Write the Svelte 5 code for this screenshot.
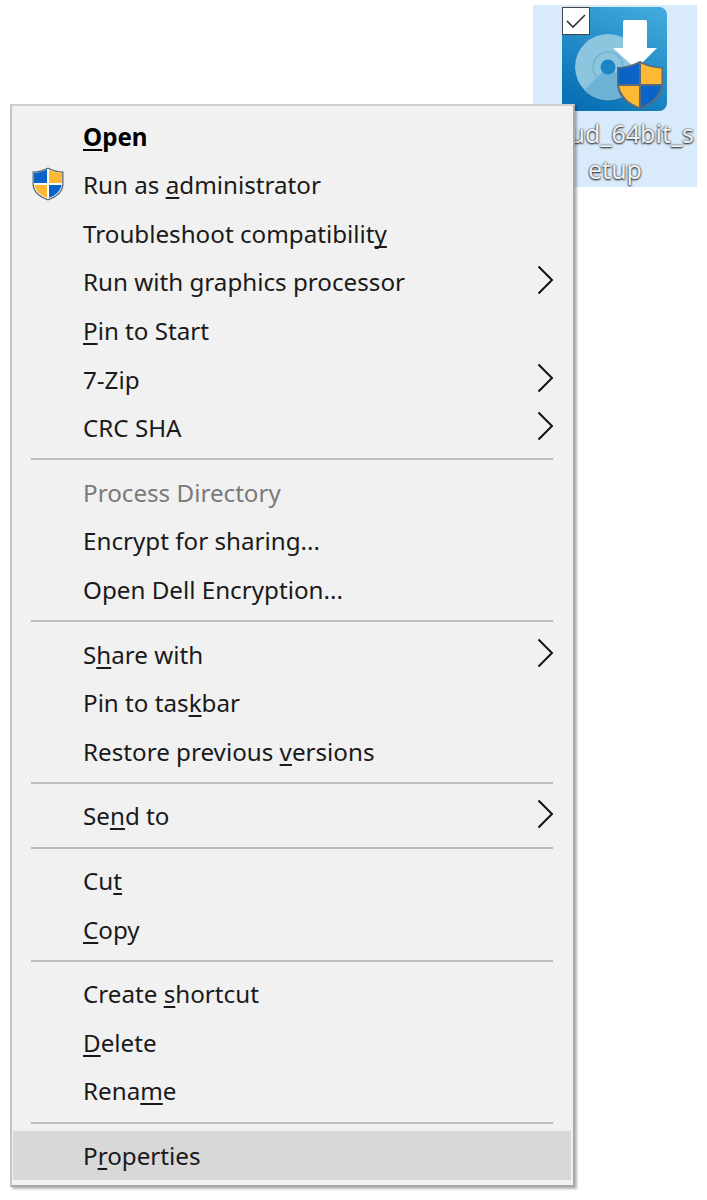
<script>
  const groups = [
    [
      { pre: '', u: 'O', post: 'pen', bold: true },
      { pre: 'Run as ', u: 'a', post: 'dministrator', shield: true },
      { pre: 'Troubleshoot compatibilit', u: 'y', post: '' },
      { pre: 'Run with graphics processor', arrow: true },
      { pre: '', u: 'P', post: 'in to Start' },
      { pre: '7-Zip', arrow: true },
      { pre: 'CRC SHA', arrow: true }
    ],
    [
      { pre: 'Process Directory', muted: true },
      { pre: 'Encrypt for sharing...' },
      { pre: 'Open Dell Encryption...' }
    ],
    [
      { pre: 'S', u: 'h', post: 'are with', arrow: true },
      { pre: 'Pin to tas', u: 'k', post: 'bar' },
      { pre: 'Restore previous ', u: 'v', post: 'ersions' }
    ],
    [{ pre: 'Se', u: 'n', post: 'd to', arrow: true }],
    [
      { pre: 'Cu', u: 't', post: '' },
      { pre: '', u: 'C', post: 'opy' }
    ],
    [
      { pre: 'Create ', u: 's', post: 'hortcut' },
      { pre: '', u: 'D', post: 'elete' },
      { pre: 'Rena', u: 'm', post: 'e' }
    ],
    [{ pre: 'P', u: 'r', post: 'operties', active: true }]
  ];
</script>

<div class="page">
  <div class="desktop-icon">
    <div class="tile">
      <svg class="art" viewBox="0 0 105 104" width="105" height="104">
        <defs>
          <linearGradient id="tileBg" x1="0.8" y1="0" x2="0.3" y2="1">
            <stop offset="0" stop-color="#3fa9dc" />
            <stop offset="1" stop-color="#0870b4" />
          </linearGradient>
        </defs>
        <rect width="105" height="104" rx="8" fill="url(#tileBg)" />
        <circle cx="46" cy="61" r="33" fill="#0b5f9c" />
        <circle cx="46" cy="60" r="33" fill="#8cc6de" />
        <path d="M46 60 L74 78 A33 33 0 0 1 22 83 Z" fill="#6cb2d4" />
        <circle cx="46" cy="60" r="15" fill="none" stroke="#6fb2d2" stroke-width="1.5" />
        <circle cx="46" cy="60" r="7.5" fill="#1b85c5" />
        <path d="M61 15 Q61 13 63 13 H83 Q85 13 85 15 V41 H95 L74 62 L51 41 H61 Z" fill="#fff" />
        <path d="M78 54 Q90 60 101 60 V76 Q101 94 78 102 Q55 94 55 76 V60 Q66 60 78 54 Z" fill="#5c6b7a" />
        <path d="M77 56.5 V77 H56.5 V61.5 Q67 61 77 56.5 Z" fill="#0a64c8" />
        <path d="M79 56.5 Q89 61 99.5 61.5 V77 H79 Z" fill="#fdb933" />
        <path d="M77 79 V100 Q61 94 57 79 Z" fill="#fdb933" />
        <path d="M79 79 H99 Q95 94 79 100 Z" fill="#0a64c8" />
      </svg>
      <div class="check">
        <svg viewBox="0 0 26 26" width="26" height="26">
          <path d="M4 13 L10 19 L22 7" fill="none" stroke="#333" stroke-width="1.6" />
        </svg>
      </div>
    </div>
    <div class="label">cloud_64bit_setup</div>
  </div>

  <div class="menu">
    {#each groups as group, g}
      {#if g > 0}
        <div class="sep"></div>
      {/if}
      {#each group as item}
        <div class="row" class:active={item.active} class:muted={item.muted} class:bold={item.bold}>
          <span class="gutter">
            {#if item.shield}
              <svg viewBox="0 0 32 34" width="32" height="34">
                <path d="M16 0.5 Q24 4.5 31.5 4.5 V17 Q31.5 28 16 33.5 Q0.5 28 0.5 17 V4.5 Q8 4.5 16 0.5 Z" fill="#5c6b7a" />
                <path d="M16 2 Q23 5.5 30.2 5.8 V17 Q30 27 16 32 Q2 27 1.8 17 V5.8 Q9 5.5 16 2 Z" fill="#fff" />
                <path d="M15 2.5 V16 H2 V6 Q9 5.5 15 2.5 Z" fill="#0a64c8" />
                <path d="M17 2.5 Q23 5.5 30 6 V16 H17 Z" fill="#fdb933" />
                <path d="M15 18 V31 Q4.5 27 2.2 18 Z" fill="#fdb933" />
                <path d="M17 18 H29.8 Q27.5 27 17 31 Z" fill="#0a64c8" />
              </svg>
            {/if}
          </span>
          <span class="text">{item.pre}{#if item.u}<u>{item.u}</u>{/if}{item.post ?? ''}</span>
          {#if item.arrow}
            <svg class="arrow" viewBox="0 0 18 30" width="18" height="30">
              <path d="M1.5 1.5 L15 15 L1.5 28.5" fill="none" stroke="#111" stroke-width="2" />
            </svg>
          {/if}
        </div>
      {/each}
    {/each}
  </div>
</div>

<style>
  :global(body) {
    margin: 0;
    background: #fff;
  }
  .page {
    position: relative;
    width: 707px;
    height: 1200px;
    overflow: hidden;
    font-family: "Noto Sans", "Open Sans", sans-serif;
  }
  .desktop-icon {
    position: absolute;
    left: 533px;
    top: 5px;
    width: 164px;
    height: 182px;
    background: #d9eafa;
    display: flex;
    flex-direction: column;
    align-items: center;
  }
  .tile {
    position: relative;
    width: 105px;
    height: 104px;
    margin-top: 2px;
    margin-left: -2px;
  }
  .art {
    display: block;
  }
  .check {
    position: absolute;
    left: 0;
    top: 0;
    width: 26px;
    height: 26px;
    background: #fff;
    border: 1.5px solid #444;
    box-sizing: content-box;
  }
  .label {
    width: 164px;
    margin-top: 4px;
    padding: 0 2px;
    box-sizing: border-box;
    text-align: center;
    word-break: break-all;
    font-size: 25px;
    line-height: 36px;
    color: #eef1f4;
    text-shadow: 0 1px 2px #222, 0 0 2px #333;
  }
  .menu {
    position: absolute;
    left: 10px;
    top: 104px;
    width: 565px;
    box-sizing: border-box;
    padding: 5.8px 2px 5px 1px;
    background: #f1f1f1;
    border: 2px solid #a9a9a9;
    border-top-color: #d0d0d0;
    border-left-color: #c4c4c4;
    box-shadow: 2px 2px 2px rgba(0, 0, 0, 0.28);
  }
  .row {
    display: flex;
    align-items: center;
    height: 48.6px;
    font-size: 24.2px;
    color: #1a1a1a;
    white-space: nowrap;
  }
  .row.active {
    background: #d8d8d8;
  }
  .row.muted {
    color: #7a7a7a;
  }
  .row.bold {
    font-weight: 700;
    color: #000;
  }
  .gutter {
    width: 70px;
    flex: none;
    display: flex;
    justify-content: center;
    box-sizing: border-box;
  }
  .gutter svg {
    margin-right: 1px;
    margin-top: -2px;
  }
  .text {
    flex: 1;
  }
  u {
    text-decoration-thickness: 2px;
    text-underline-offset: 3px;
    text-decoration-skip-ink: none;
  }
  .arrow {
    flex: none;
    margin-right: 16px;
    margin-top: -3px;
  }
  .sep {
    height: 2px;
    margin: 6.5px 18px 7.5px 18px;
    background: #bdbdbd;
  }
</style>
